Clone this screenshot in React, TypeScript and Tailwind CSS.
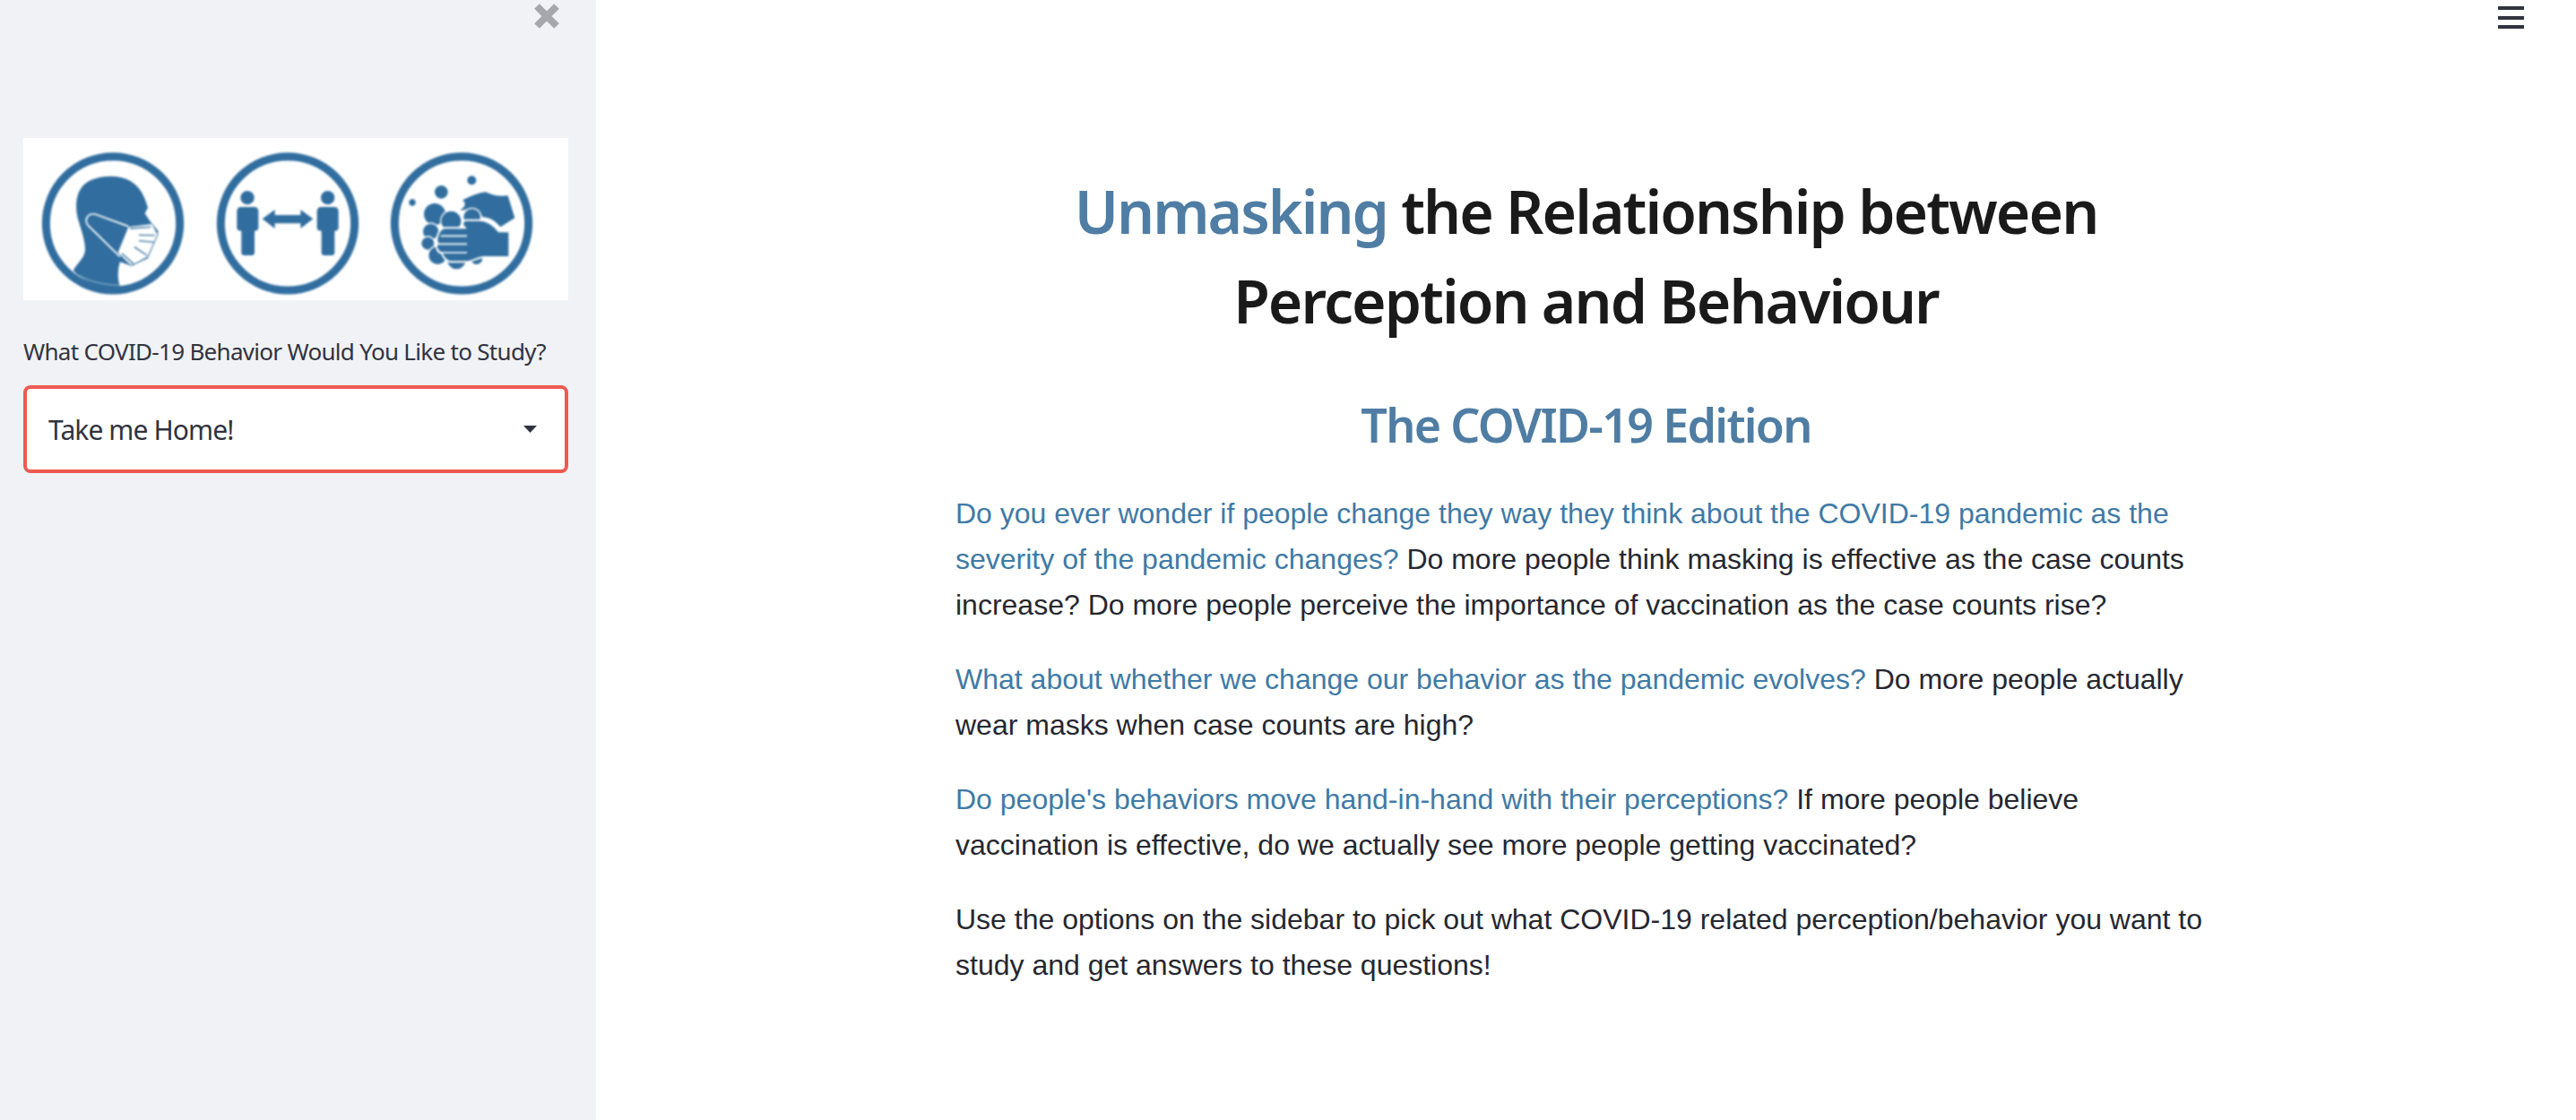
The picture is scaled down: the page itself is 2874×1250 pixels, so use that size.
const BLUE = "#316e9f";

function Badges() {
  return (
    <svg viewBox="26 154 608 181" className="block h-[181px] w-[608px] bg-white">
      <defs>
        <clipPath id="faceClip">
          <circle cx="285" cy="283" r="225" />
        </clipPath>
      </defs>
      <g className="blur-[0.8px]">
        <g transform="translate(30 155) scale(0.3333)">
          <circle cx="288" cy="283" r="224" fill="#fff" stroke={BLUE} strokeWidth="27" />
          <path
            clipPath="url(#faceClip)"
            fill={BLUE}
            d="M155 440C175 410 195 395 195 370C195 340 180 300 170 265C160 220 165 175 195 150C225 125 300 115 345 140C380 160 395 195 405 230L395 250L412 275L440 310L405 400L350 425L312 412C303 440 303 470 312 495L280 500C230 495 180 470 155 440Z"
          />
          <path d="M340 295L420 285L438 320L405 395L350 425L305 380Z" fill="#fff" />
          <path
            d="M340 293L228 252C205 247 190 270 205 290L312 395"
            fill="none"
            stroke="#fff"
            strokeWidth="5"
          />
          <path
            d="M420 285L438 320L405 395L350 425L312 395"
            fill="none"
            stroke={BLUE}
            strokeWidth="3"
          />
          <path
            d="M345 300L415 295M375 322L428 323M375 341L425 346M360 362L402 390M318 383L358 420"
            stroke={BLUE}
            strokeWidth="4"
            fill="none"
          />
          <path d="M175 458C215 478 260 490 310 490" stroke="#cfdfeb" strokeWidth="2" fill="none" />
        </g>
        <g transform="translate(230 155) scale(0.3333)">
          <circle cx="273" cy="283" r="224" fill="#fff" stroke={BLUE} strokeWidth="27" />
          <circle cx="138" cy="197" r="23" fill={BLUE} />
          <circle cx="407" cy="197" r="23" fill={BLUE} />
          <path
            fill={BLUE}
            d="M118 228H160Q175 228 175 243V298Q175 308 162 308V380Q162 390 152 390H128Q118 390 118 380V308Q103 308 103 298V243Q103 228 118 228Z"
          />
          <path
            fill={BLUE}
            d="M386 228H428Q443 228 443 243V298Q443 308 430 308V380Q430 390 420 390H396Q386 390 386 380V308Q371 308 371 298V243Q371 228 386 228Z"
          />
          <path
            fill={BLUE}
            d="M188 268L230 237V255H316V237L358 268L316 300V283H230V300Z"
          />
        </g>
        <g transform="translate(420 155) scale(0.3333)">
          <circle cx="285" cy="283" r="224" fill="#fff" stroke={BLUE} strokeWidth="27" />
          <circle cx="217" cy="178" r="22" fill={BLUE} />
          <circle cx="319" cy="139" r="15" fill={BLUE} />
          <circle cx="120" cy="213" r="11" fill={BLUE} />
          <path
            fill={BLUE}
            d="M288 205C310 195 340 180 365 178C385 185 400 195 440 190L463 265L415 295C395 270 370 262 355 262C345 235 320 230 280 240C300 225 300 215 288 205Z"
          />
          <g fill={BLUE} stroke="#fff" strokeWidth="4">
            <circle cx="195" cy="252" r="38" />
            <circle cx="250" cy="275" r="35" />
            <circle cx="320" cy="262" r="30" />
            <circle cx="182" cy="310" r="28" />
            <circle cx="172" cy="350" r="23" />
            <circle cx="205" cy="390" r="32" />
            <circle cx="268" cy="405" r="33" />
            <circle cx="335" cy="400" r="22" />
          </g>
          <path
            fill={BLUE}
            stroke="#fff"
            strokeWidth="6"
            d="M445 310H410C390 285 370 272 345 272H300C285 272 285 296 300 298H228C205 303 198 340 205 350C195 360 205 380 218 382C222 395 235 412 250 412H300C320 412 340 396 360 396H445Z"
          />
          <path d="M215 325H303M205 352H303M218 381H303" stroke="#fff" strokeWidth="5" fill="none" />
        </g>
      </g>
    </svg>
  );
}

export default function App() {
  return (
    <div className="flex h-[1250px] w-[2874px] overflow-hidden bg-white font-['Liberation_Sans',Arial,sans-serif] text-[#262730]">
      <aside className="flex h-full w-[665px] shrink-0 flex-col bg-[#f0f2f6] pl-[26px] pr-[31px] font-['Noto_Sans',sans-serif]">
        <div className="flex h-[154px] items-start justify-end pt-[3px] pr-[9px]">
          <svg width="30" height="30" viewBox="0 0 30 30">
            <path d="M4 4L26 26M26 4L4 26" stroke="#a5a7ac" strokeWidth="8" fill="none" />
          </svg>
        </div>
        <Badges />
        <label className="mt-[39px] text-[26px] leading-[36px] tracking-[-0.7px] text-[#31333f]">
          What COVID-19 Behavior Would You Like to Study?
        </label>
        <div className="mt-[20px] flex h-[98px] w-[608px] items-center justify-between rounded-[8px] border-[4px] border-[#ef5a52] bg-white pl-[24px] pr-[31px]">
          <span className="text-[30px] tracking-[-0.9px] text-[#31333f]">Take me Home!</span>
          <svg width="15" height="8" viewBox="0 0 15 8">
            <path d="M0 0H15L7.5 8Z" fill="#31333f" />
          </svg>
        </div>
      </aside>
      <main className="flex min-w-0 flex-1 flex-col">
        <div className="flex h-[32px] justify-end pt-[7px] pr-[58px]">
          <div className="flex h-[25px] w-[29px] flex-col justify-between">
            <span className="h-[4px] bg-[#31333f]"></span>
            <span className="h-[4px] bg-[#31333f]"></span>
            <span className="h-[4px] bg-[#31333f]"></span>
          </div>
        </div>
        <div className="mx-auto flex w-[1407px] flex-col">
          <h1 className="mt-[153px] text-center font-['Noto_Sans',sans-serif] text-[66px] leading-[100px] font-semibold tracking-[-1.95px] text-[#1a1a1a]">
            <span className="text-[#4f7da3]">Unmasking</span> the Relationship between
            <br />
            Perception and Behaviour
          </h1>
          <h2 className="mt-[47px] text-center font-['Noto_Sans',sans-serif] text-[52px] leading-[84px] font-semibold tracking-[-1.7px] text-[#4f7da3]">
            The COVID-19 Edition
          </h2>
          <p className="mt-[32px] text-[32px] leading-[51px]">
            <span className="text-[#3f7aa6]">
              Do you ever wonder if people change they way they think about the COVID-19 pandemic as the severity of the pandemic changes?
            </span>{" "}
            Do more people think masking is effective as the case counts increase? Do more people perceive the importance of vaccination as the case counts rise?
          </p>
          <p className="mt-[32px] text-[32px] leading-[51px]">
            <span className="text-[#3f7aa6]">
              What about whether we change our behavior as the pandemic evolves?
            </span>{" "}
            Do more people actually wear masks when case counts are high?
          </p>
          <p className="mt-[32px] text-[32px] leading-[51px]">
            <span className="text-[#3f7aa6]">
              Do people's behaviors move hand-in-hand with their perceptions?
            </span>{" "}
            If more people believe vaccination is effective, do we actually see more people getting vaccinated?
          </p>
          <p className="mt-[32px] text-[32px] leading-[51px]">
            Use the options on the sidebar to pick out what COVID-19 related perception/behavior you want to study and get answers to these questions!
          </p>
        </div>
      </main>
    </div>
  );
}
